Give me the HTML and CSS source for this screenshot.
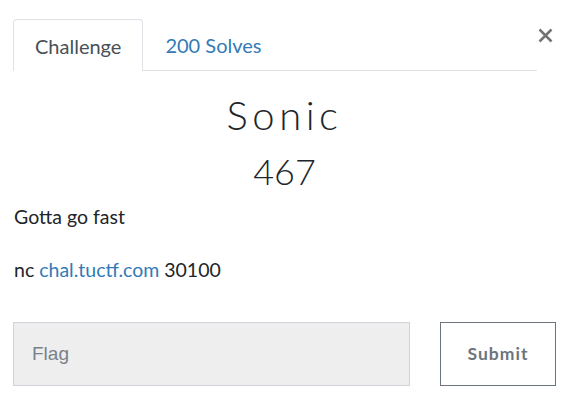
FILE: index.html
```html
<!DOCTYPE html>
<html>
<head>
<meta charset="utf-8">
<link rel="stylesheet" href="styles.css">
</head>
<body>
<div class="modal">
  <div class="top">
    <ul class="tabs">
      <li class="tab active">Challenge</li>
      <li class="tab"><a href="#">200 Solves</a></li>
    </ul>
    <button class="close" aria-label="Close">
      <svg width="15" height="15" viewBox="0 0 15 15"><path d="M1.5 1.5 L13.5 13.5 M13.5 1.5 L1.5 13.5" stroke="#737373" stroke-width="2.5" fill="none"/></svg>
    </button>
  </div>
  <h2 class="title">Sonic</h2>
  <h3 class="points">467</h3>
  <p class="desc">Gotta go fast</p>
  <p class="desc">nc <a href="#">chal.tuctf.com</a> 30100</p>
  <form class="submit-row">
    <input class="flag" type="text" placeholder="Flag">
    <button type="button" class="btn">Submit</button>
  </form>
</div>
</body>
</html>
```
FILE: styles.css
```css
html, body {
  margin: 0;
  padding: 0;
  background: #fff;
}
body {
  font-family: Lato, "Open Sans", sans-serif;
  color: #212529;
}
.modal {
  padding: 19px 27px 0 13px;
}
.top {
  display: flex;
  align-items: flex-start;
}
.tabs {
  flex: 1;
  display: flex;
  margin: 0;
  padding: 0;
  list-style: none;
  border-bottom: 1px solid #dee2e6;
}
.tab {
  height: 51px;
  box-sizing: border-box;
  padding: 0 21px;
  display: flex;
  align-items: center;
  font-size: 20px;
  border: 1px solid transparent;
  border-bottom: none;
  margin-bottom: -1px;
}
.tab.active {
  height: 52px;
  color: #495057;
  border-color: #dee2e6;
  border-radius: 4px 4px 0 0;
  background: #fff;
}
.tab a {
  color: #337ab7;
  text-decoration: none;
}
.close {
  margin: 9px 3px 0 1px;
  padding: 0;
  border: 0;
  background: none;
  width: 15px;
  height: 15px;
  display: flex;
}
.title {
  margin: 20px 0 0;
  text-align: center;
  font-weight: 300;
  font-size: 40px;
  letter-spacing: 4.5px;
  line-height: 1.2;
}
.points {
  margin: 10px 0 0;
  text-align: center;
  font-weight: 300;
  font-size: 36px;
  line-height: 1.25;
}
.desc {
  margin: 8px 0 0 1px;
  font-size: 19.5px;
  line-height: 1.5;
}
.desc + .desc {
  margin-top: 24px;
}
.desc a {
  color: #337ab7;
  text-decoration: none;
}
.submit-row {
  margin-top: 37px;
  display: flex;
  gap: 30px;
}
.flag {
  flex: 1;
  height: 64px;
  box-sizing: border-box;
  margin: 0;
  padding: 0 18px;
  background: #eee;
  border: 1px solid #ced4da;
  border-radius: 0;
  font-family: "Liberation Sans", Arial, sans-serif;
  font-size: 19px;
  color: #495057;
}
.flag::placeholder {
  color: #7a8189;
}
.btn {
  width: 116px;
  height: 64px;
  box-sizing: border-box;
  margin: 0;
  background: #fff;
  border: 1px solid #6c757d;
  border-radius: 0;
  font-family: Lato, sans-serif;
  font-weight: 700;
  font-size: 17.5px;
  letter-spacing: 1px;
  color: #6c757d;
}
```
